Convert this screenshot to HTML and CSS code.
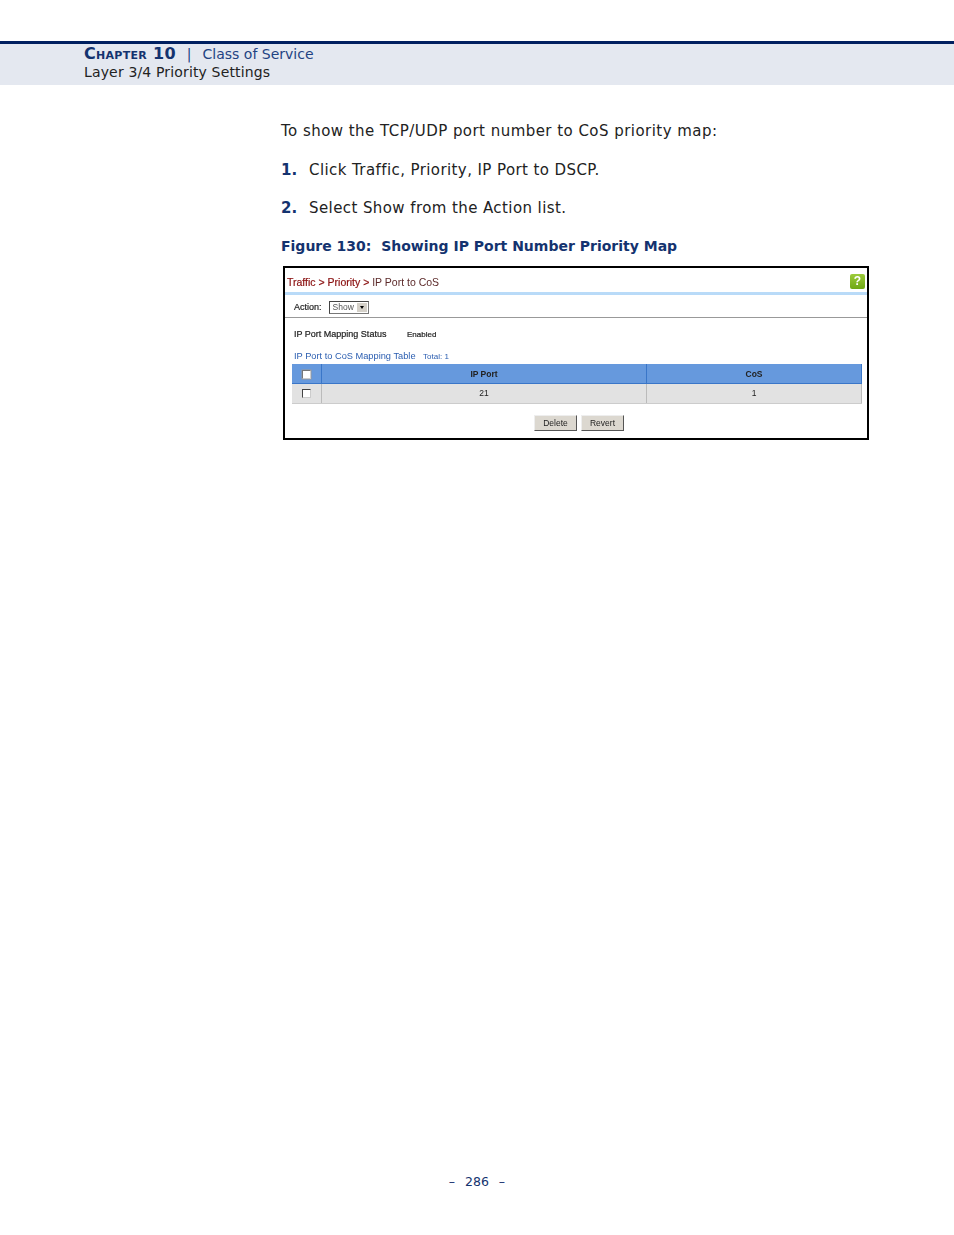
FILE: index.html
```html
<!DOCTYPE html>
<html lang="en">
<head>
    <meta charset="UTF-8">
    <title>Layer 3/4 Priority Settings</title>
    <link rel="stylesheet" href="styles.css">
</head>
<body>
    <div class="page">
        <header class="page-header">
            <div class="chapter-line"><span class="chapter">Chapter 10</span><span class="sep">|</span><span class="chapter-name">Class of Service</span></div>
            <div class="section-line">Layer 3/4 Priority Settings</div>
        </header>

        <main class="content">
            <p class="intro">To show the TCP/UDP port number to CoS priority map:</p>
            <ol class="steps">
                <li><span class="step-num">1.</span>Click Traffic, Priority, IP Port to DSCP.</li>
                <li><span class="step-num">2.</span>Select Show from the Action list.</li>
            </ol>
            <h4 class="figure-title">Figure 130:&nbsp; Showing IP Port Number Priority Map</h4>

            <div class="shot">
                <div class="shot-title">
                    <span class="crumbs"><b>Traffic &gt; Priority &gt;</b> IP Port to CoS</span>
                    <span class="help">?</span>
                </div>
                <div class="action-row">
                    <span class="label">Action:</span>
                    <span class="select"><span class="select-text">Show</span><span class="select-btn"></span></span>
                </div>
                <div class="status-row">
                    <span class="label status-label">IP Port Mapping Status</span>
                    <span class="status-value">Enabled</span>
                </div>
                <div class="table-title">IP Port to CoS Mapping Table <span class="total">Total: 1</span></div>
                <table class="map-table">
                    <thead>
                        <tr><th class="check-col"><span class="check"></span></th><th class="port-col">IP Port</th><th>CoS</th></tr>
                    </thead>
                    <tbody>
                        <tr><td class="check-col"><span class="check"></span></td><td class="port-col">21</td><td>1</td></tr>
                    </tbody>
                </table>
                <div class="buttons">
                    <button class="btn">Delete</button>
                    <button class="btn">Revert</button>
                </div>
            </div>
        </main>

        <footer class="page-footer">–&nbsp; 286 &nbsp;–</footer>
    </div>
</body>
</html>
```

FILE: styles.css
```css
html, body {
    margin: 0;
    padding: 0;
    background: #ffffff;
}

.page {
    height: 1235px;
    display: flex;
    flex-direction: column;
    padding-top: 41px;
    box-sizing: border-box;
    font-family: "DejaVu Sans", Verdana, sans-serif;
    color: #222222;
}

/* Header band */
.page-header {
    height: 40px;
    border-top: 3px solid #002060;
    background: #e4e8f0;
    padding-left: 84px;
    font-size: 14px;
    line-height: 18px;
    padding-top: 1px;
}
.chapter-line {
    color: #1f4383;
}
.chapter {
    font-weight: bold;
    font-variant: small-caps;
    color: #14336f;
    font-size: 16px;
    letter-spacing: 0.3px;
}
.sep {
    margin: 0 11px 0 11px;
}
.section-line {
    color: #222222;
    letter-spacing: 0.15px;
}

/* Body text */
.content {
    flex: 1;
    padding: 37px 0 0 281px;
    font-size: 15px;
    letter-spacing: 0.46px;
}
.intro {
    margin: 0 0 21px;
    line-height: 18px;
}
.steps {
    list-style: none;
    margin: 0;
    padding: 0;
}
.steps li {
    line-height: 18px;
    margin-bottom: 20px;
    letter-spacing: 0.41px;
}
.step-num {
    display: inline-block;
    width: 28px;
    font-weight: bold;
    color: #14336f;
    letter-spacing: 0;
}
.figure-title {
    margin: 0 0 11px;
    font-size: 14px;
    line-height: 18px;
    letter-spacing: 0;
    color: #14336f;
}

/* Embedded screenshot */
.shot {
    width: 582px;
    height: 170px;
    margin-left: 2px;
    border: 2px solid #000000;
    background: #ffffff;
    font-family: "Liberation Sans", Arial, sans-serif;
    font-size: 9px;
    letter-spacing: 0;
    color: #222222;
    filter: blur(0.3px);
}
.shot-title {
    height: 20px;
    padding: 4px 2px 0;
    display: flex;
    justify-content: space-between;
    align-items: center;
    border-bottom: 3px solid #bcdcf8;
    border-image: linear-gradient(#e6f2fc, #b8daf8) 1;
    font-size: 10.5px;
    color: #5c2a2a;
}
.crumbs b {
    font-weight: normal;
    color: #8a1010;
    -webkit-text-stroke: 0.2px #8a1010;
}
.help {
    width: 15px;
    height: 15px;
    margin-bottom: 1px;
    border-radius: 2px;
    background: linear-gradient(#9ccb3a, #6fa815);
    color: #ffffff;
    font-weight: bold;
    font-size: 12px;
    line-height: 15px;
    text-align: center;
}
.action-row {
    height: 20px;
    padding: 2px 0 0 9px;
    display: flex;
    align-items: center;
    gap: 7px;
    border-bottom: 1px solid #999999;
}
.label {
    font-size: 9px;
    color: #222222;
    -webkit-text-stroke: 0.2px #222222;
}
.select {
    width: 40px;
    height: 13px;
    display: flex;
    justify-content: space-between;
    align-items: center;
    box-sizing: border-box;
    border: 1px solid #777777;
    border-top-color: #444444;
    border-left-color: #444444;
    padding: 0 1px 0 3px;
    font-size: 8.5px;
    color: #555555;
}
.select-btn {
    width: 10px;
    height: 9px;
    background: #d4d0c8;
    position: relative;
}
.select-btn::after {
    content: "";
    position: absolute;
    left: 3px;
    top: 3px;
    border: 2px solid transparent;
    border-top: 3px solid #000000;
    border-bottom: 0;
}
.status-row {
    padding: 11px 0 0 9px;
    height: 14px;
    line-height: 10px;
    display: flex;
}
.status-label {
    width: 113px;
}
.status-value {
    margin-top: 1px;
    font-size: 8px;
    -webkit-text-stroke: 0.2px #222222;
}
.table-title {
    margin-top: 8px;
    padding-left: 9px;
    height: 13px;
    line-height: 10px;
    font-size: 9.25px;
    color: #2a5db0;
}
.total {
    margin-left: 5px;
    font-size: 8px;
}
.map-table {
    width: 570px;
    margin-left: 7px;
    border-collapse: collapse;
    table-layout: fixed;
    font-size: 8.5px;
}
.map-table th {
    height: 19px;
    padding: 0;
    background: #6699dd;
    border-bottom: 1px solid #3a76c8;
    border-right: 1px solid #3a76c8;
    color: #222222;
}
.map-table td {
    height: 18px;
    padding: 0 0 1px;
    background: #e2e2e2;
    border-right: 1px solid #bbbbbb;
    border-bottom: 1px solid #cccccc;
    text-align: center;
}
.check-col {
    width: 29px;
}
.port-col {
    width: 324px;
}
.check {
    display: inline-block;
    width: 7px;
    height: 7px;
    vertical-align: middle;
    background: #ffffff;
    border: 1px solid;
    border-color: #444444 #cccccc #cccccc #444444;
}
th .check {
    border-color: #777777 #cccccc #cccccc #777777;
    box-shadow: 0 0 0 0.5px #9a9a9a;
}
.buttons {
    display: flex;
    justify-content: center;
    gap: 4px;
    padding: 11px 0 0 6px;
}
.btn {
    width: 43px;
    height: 16px;
    padding: 0;
    font-family: inherit;
    font-size: 8.5px;
    color: #222222;
    background: #dcd8d0;
    border: 1px solid;
    border-color: #eeeeee #555555 #555555 #eeeeee;
}

/* Footer */
.page-footer {
    height: 61px;
    text-align: center;
    font-size: 12.5px;
    line-height: 16px;
    word-spacing: 1px;
    color: #14336f;
}
```
